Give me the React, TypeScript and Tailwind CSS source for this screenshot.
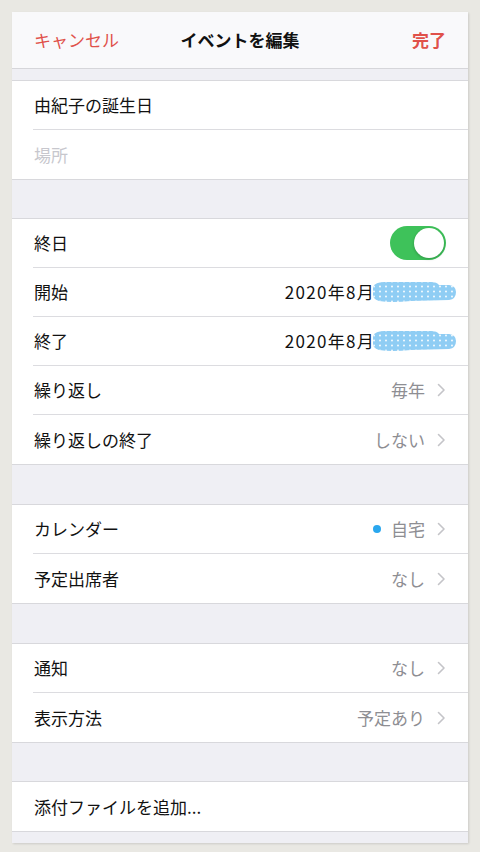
import React from "react";

const font = { fontFamily: '"Noto Sans CJK JP", "Noto Sans", sans-serif' };

function Chevron() {
  return (
    <svg width="9" height="14" viewBox="0 0 9 14" className="ml-[12px] shrink-0">
      <polyline points="1.5,1.5 7,7 1.5,12.5" fill="none" stroke="#c4c4c8" strokeWidth="1.6" strokeLinecap="round" strokeLinejoin="round" />
    </svg>
  );
}

function Scribble({ id }: { id: string }) {
  return (
    <svg width="86" height="26" viewBox="0 0 86 26" className="shrink-0 -ml-[1px]">
      <defs>
        <pattern id={id} width="6" height="5" patternUnits="userSpaceOnUse">
          <circle cx="3" cy="2.5" r="0.9" fill="#ffffff" />
        </pattern>
      </defs>
      <path d="M2 8 Q4 3 14 3 L60 3 Q66 3 68 6 L78 6 Q85 7 85 13 Q85 20 78 21 L40 22 Q20 24 8 22 Q1 20 2 14 Z" fill="#8fcdf4" />
      <path d="M2 8 Q4 3 14 3 L60 3 Q66 3 68 6 L78 6 Q85 7 85 13 Q85 20 78 21 L40 22 Q20 24 8 22 Q1 20 2 14 Z" fill={`url(#${id})`} />
    </svg>
  );
}

function Row({ label, last, children, placeholder }: { label: string; last?: boolean; children?: React.ReactNode; placeholder?: boolean }) {
  return (
    <div className="pl-[21px] bg-white">
      <div className={`flex items-center h-[49px] pl-[1px] pr-[22px] ${last ? "" : "border-b border-[#dcdce0]"}`}>
        <span className={`text-[17px] ${placeholder ? "text-[#c7c7cd]" : "text-[#111]"}`}>{label}</span>
        <div className="ml-auto flex items-center">{children}</div>
      </div>
    </div>
  );
}

function Value({ text }: { text: string }) {
  return (
    <>
      <span className="text-[17px] text-[#8e8e93]">{text}</span>
      <Chevron />
    </>
  );
}

function Section({ children }: { children: React.ReactNode }) {
  return <div className="border-y border-[#d8d8dc] bg-white">{children}</div>;
}

export default function App() {
  return (
    <div className="w-[480px] h-[852px] bg-[#e9e8e3] pt-[12px] overflow-hidden" style={font}>
      <div className="ml-[12px] w-[456px] bg-[#efeff4] pb-[11px] shadow-[1px_1px_2px_rgba(0,0,0,0.12)]">
        <div className="h-[57px] bg-[#f9f9fb] border-b border-[#d6d6da] flex items-center px-[22px]">
          <span className="text-[17px] text-[#e0514a] w-[100px]">キャンセル</span>
          <span className="flex-1 text-center text-[17px] font-bold text-[#111]">イベントを編集</span>
          <span className="w-[100px] text-right text-[17px] font-bold text-[#e0514a]">完了</span>
        </div>
        <div className="h-[11px]" />
        <Section>
          <Row label="由紀子の誕生日" />
          <Row label="場所" placeholder last />
        </Section>
        <div className="h-[38px]" />
        <Section>
          <Row label="終日">
            <div className="w-[56px] h-[34px] rounded-full bg-[#3ec25a] flex items-center justify-end pr-[2px]">
              <div className="w-[30px] h-[30px] rounded-full bg-white shadow-[0_1px_3px_rgba(0,0,0,0.25)]" />
            </div>
          </Row>
          <Row label="開始">
            <span className="text-[17px] text-[#111] tracking-[1.3px] -mr-[3px]">2020年8月</span>
            <div className="-mr-[11px]"><Scribble id="s1" /></div>
          </Row>
          <Row label="終了">
            <span className="text-[17px] text-[#111] tracking-[1.3px] -mr-[3px]">2020年8月</span>
            <div className="-mr-[11px]"><Scribble id="s2" /></div>
          </Row>
          <Row label="繰り返し">
            <Value text="毎年" />
          </Row>
          <Row label="繰り返しの終了" last>
            <Value text="しない" />
          </Row>
        </Section>
        <div className="h-[39px]" />
        <Section>
          <Row label="カレンダー">
            <span className="w-[8px] h-[8px] rounded-full bg-[#2aa7ee] mr-[10px]" />
            <Value text="自宅" />
          </Row>
          <Row label="予定出席者" last>
            <Value text="なし" />
          </Row>
        </Section>
        <div className="h-[39px]" />
        <Section>
          <Row label="通知">
            <Value text="なし" />
          </Row>
          <Row label="表示方法" last>
            <Value text="予定あり" />
          </Row>
        </Section>
        <div className="h-[38px]" />
        <Section>
          <Row label="添付ファイルを追加..." last />
        </Section>
      </div>
    </div>
  );
}
